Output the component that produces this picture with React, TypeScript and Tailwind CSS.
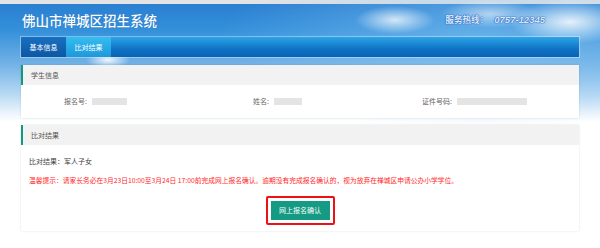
import type { ReactNode } from 'react'

// ─── Panel ────────────────────────────────────────────────────────

function Panel({ title, children, bodyClass }: { title: string; children: ReactNode; bodyClass: string }) {
    return (
        <section className="bg-white shadow-[0_0_2px_rgba(0,0,0,0.12)]">
            <div className="flex h-[20px] items-center border-l-[2px] border-[#10997f] bg-[#f2f2f2] pl-[8px] text-[7px] text-[#555]">
                {title}
            </div>
            <div className={bodyClass}>{children}</div>
        </section>
    )
}

function Field({ label, blurWidth }: { label: string; blurWidth: string }) {
    return (
        <div className="flex items-center gap-[5px]">
            <span className="text-[7px] text-[#666]">{label}</span>
            <span className={`h-[7px] ${blurWidth} bg-[#e4e4e4] blur-[0.5px]`} />
        </div>
    )
}

// ─── Page ─────────────────────────────────────────────────────────

export default function App() {
    return (
        <div
            className="h-[248px] w-[600px] overflow-hidden bg-white bg-[radial-gradient(ellipse_40px_14px_at_395px_20px,rgba(255,255,255,0.75),transparent),radial-gradient(ellipse_60px_22px_at_570px_22px,rgba(255,255,255,0.85),transparent),radial-gradient(ellipse_50px_14px_at_490px_14px,rgba(255,255,255,0.55),transparent),radial-gradient(ellipse_22px_8px_at_108px_60px,rgba(255,255,255,0.9),transparent),radial-gradient(ellipse_260px_90px_at_480px_40px,rgba(140,200,245,0.55),transparent),linear-gradient(180deg,#e3e3e3_0px,#e3e3e3_4px,#2a7fd1_4px,#3490da_30px,#74b3e6_65px,#b9daf3_95px,#e9f3fb_112px,#ffffff_122px)] bg-no-repeat"
            style={{ fontFamily: '"Noto Sans CJK SC", "Noto Sans", sans-serif' }}
        >
            <header className="flex h-[37px] items-center justify-between pt-[4px] pl-[22px] pr-[55px]">
                <h1 className="text-[13.5px] font-medium text-white [text-shadow:0_0_1px_rgba(20,70,150,0.4)]">
                    佛山市禅城区招生系统
                </h1>
                <div className="text-[8.6px] font-bold text-[#d6e7fb] [text-shadow:0_0_1px_#2c63b8,0_0_1px_#2c63b8,0_0_1px_#2c63b8]">
                    服务热线：
                    <span className="ml-[6px] text-[9.5px] italic" style={{ fontFamily: '"Liberation Sans", sans-serif' }}>
                        0757-12345
                    </span>
                </div>
            </header>

            <div className="px-[21px]">
                <nav className="flex h-[20px] bg-[linear-gradient(180deg,#2ba5e8,#0f72c4_60%,#0a62b5)] shadow-[0_0_0_1px_rgba(255,255,255,0.35)]">
                    <div className="flex w-[45px] items-center justify-center bg-[linear-gradient(180deg,#1870c0,#0c57a4)] text-[7px] text-white">
                        基本信息
                    </div>
                    <div className="flex w-[45px] items-center justify-center bg-[linear-gradient(180deg,#34bdf0,#1d98dc)] text-[7px] text-white">
                        比对结果
                    </div>
                </nav>

                <div className="mt-[8px] flex flex-col gap-[7px]">
                    <Panel title="学生信息" bodyClass="grid h-[33px] grid-cols-[189px_169px_1fr] items-center pl-[43px]">
                        <Field label="报名号:" blurWidth="w-[35px]" />
                        <Field label="姓名:" blurWidth="w-[28px]" />
                        <Field label="证件号码:" blurWidth="w-[70px]" />
                    </Panel>

                    <Panel title="比对结果" bodyClass="flex h-[86px] flex-col pl-[8px]">
                        <p className="mt-[11px] text-[7px] leading-[10px] text-[#444]">比对结果：军人子女</p>
                        <p className="mt-[9px] text-[6.75px] leading-[10px] text-[#ff1f1f]">
                            温馨提示：请家长务必在3月23日10:00至3月24日 17:00前完成网上报名确认。逾期没有完成报名确认的，视为放弃在禅城区申请公办小学学位。
                        </p>
                        <div className="mt-[11px] flex justify-center pr-[8px]">
                            <div className="rounded-[2px] border-[2px] border-[#ee1111] p-[3px]">
                                <button className="flex h-[19px] w-[59px] items-center justify-center bg-[#159a84] text-[7px] text-white">
                                    网上报名确认
                                </button>
                            </div>
                        </div>
                    </Panel>
                </div>
            </div>
        </div>
    )
}
